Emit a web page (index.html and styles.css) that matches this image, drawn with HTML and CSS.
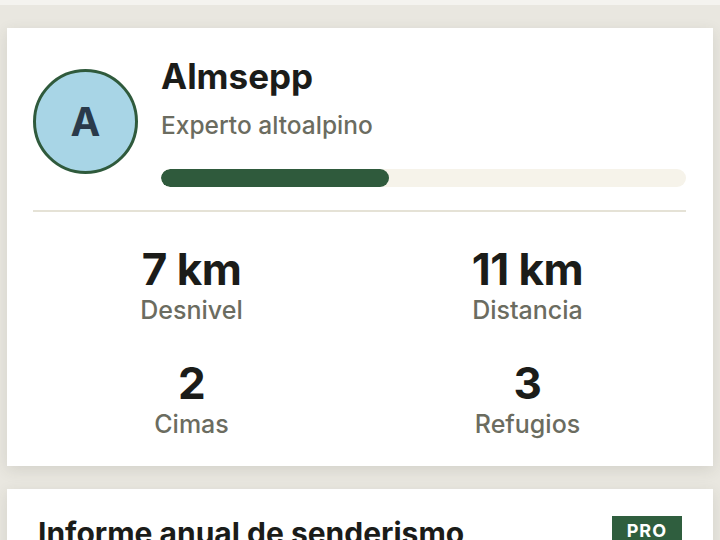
FILE: index.html
```html
<!DOCTYPE html>
<html lang="es">
<head>
    <meta charset="UTF-8">
    <meta name="viewport" content="width=device-width, initial-scale=1.0">
    <title>Perfil</title>
    <link rel="stylesheet" href="styles.css">
</head>
<body>
    <div class="topbar"></div>
    <div class="page">
        <div class="card profile">
            <div class="profile-head">
                <div class="avatar">A</div>
                <div class="profile-info">
                    <h1 class="name">Almsepp</h1>
                    <p class="level">Experto altoalpino</p>
                    <div class="progress">
                        <div class="progress-fill" style="width: 43.5%"></div>
                    </div>
                </div>
            </div>
            <div class="divider"></div>
            <div class="stats">
                <div class="stat">
                    <span class="stat-value">7 km</span>
                    <span class="stat-label">Desnivel</span>
                </div>
                <div class="stat">
                    <span class="stat-value">11 km</span>
                    <span class="stat-label">Distancia</span>
                </div>
                <div class="stat">
                    <span class="stat-value">2</span>
                    <span class="stat-label">Cimas</span>
                </div>
                <div class="stat">
                    <span class="stat-value">3</span>
                    <span class="stat-label">Refugios</span>
                </div>
            </div>
        </div>

        <div class="card report">
            <div class="report-head">
                <h2 class="report-title">Informe anual de senderismo</h2>
                <span class="badge">PRO</span>
            </div>
        </div>
    </div>
</body>
</html>
```

FILE: styles.css
```css
body {
    margin: 0;
    background-color: #e9e7e0;
    font-family: Inter, "Liberation Sans", sans-serif;
    color: #1b1c19;
}

.topbar {
    height: 5px;
    background-color: #f4f3ef;
}

.page {
    padding: 23px 7px 0;
    display: flex;
    flex-direction: column;
    gap: 23px;
}

.card {
    background-color: #fff;
    box-shadow: 0 4px 14px rgba(60, 55, 40, 0.12);
}

.profile {
    padding: 28px 27px 25px 26px;
}

.profile-head {
    display: flex;
    align-items: center;
    gap: 23px;
}

.avatar {
    width: 99px;
    height: 99px;
    flex-shrink: 0;
    border-radius: 50%;
    border: 3px solid #2f5a3c;
    background-color: #a8d5e6;
    color: #2a3a4a;
    font-size: 40px;
    font-weight: bold;
    display: flex;
    align-items: center;
    justify-content: center;
}

.profile-info {
    flex: 1;
}

.name {
    margin: 0;
    font-size: 35px;
    line-height: 40px;
    font-weight: bold;
}

.level {
    margin: 14px 0 0;
    font-size: 24.5px;
    line-height: 30px;
    font-weight: 500;
    color: #6b6c60;
}

.progress {
    margin-top: 29px;
    height: 18px;
    border-radius: 9px;
    background-color: #f6f3ea;
    overflow: hidden;
}

.progress-fill {
    height: 100%;
    border-radius: 9px;
    background-color: #2f5a3c;
}

.divider {
    height: 2px;
    margin-top: 23px;
    background-color: #e5e2d6;
}

.stats {
    display: grid;
    grid-template-columns: 1fr 1fr;
    column-gap: 19px;
    row-gap: 32px;
    padding-top: 33px;
}

.stat {
    display: flex;
    flex-direction: column;
    align-items: center;
}

.stat-value {
    font-size: 44px;
    line-height: 48px;
    font-weight: bold;
    letter-spacing: -0.5px;
}

.stat-label {
    font-size: 25px;
    line-height: 34px;
    font-weight: 500;
    color: #6b6c60;
}

.report {
    padding: 26px 31px 0 31px;
    height: 60px;
}

.report-head {
    display: flex;
    justify-content: space-between;
    align-items: flex-start;
}

.report-title {
    margin: 0;
    font-size: 30px;
    line-height: 36px;
    font-weight: bold;
}

.badge {
    margin-top: 1px;
    padding: 4px 15px;
    background-color: #2f5e3e;
    color: #fff;
    font-size: 18px;
    font-weight: bold;
    letter-spacing: 1px;
}
```
